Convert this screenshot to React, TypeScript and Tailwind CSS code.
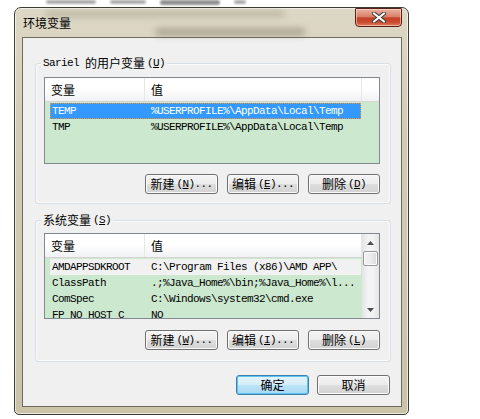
import React from "react";

type Row = { name: string; value: string; state?: "focus" | "dim" };

const cjk = "font-['SimSun','Noto_Sans_CJK_SC',sans-serif]";
const mono = "font-['Liberation_Mono','Noto_Sans_CJK_SC',monospace] text-[11px] tracking-[-0.6px]";

const userVars: Row[] = [
  { name: "TEMP", value: "%USERPROFILE%\\AppData\\Local\\Temp", state: "focus" },
  { name: "TMP", value: "%USERPROFILE%\\AppData\\Local\\Temp" },
];

const sysVars: Row[] = [
  { name: "AMDAPPSDKROOT", value: "C:\\Program Files (x86)\\AMD APP\\", state: "dim" },
  { name: "ClassPath", value: ".;%Java_Home%\\bin;%Java_Home%\\l..." },
  { name: "ComSpec", value: "C:\\Windows\\system32\\cmd.exe" },
  { name: "FP_NO_HOST_C", value: "NO" },
];

// label like 新建 (N)...
const Mn = ({ zh, pre, k, post }: { zh: string; pre?: string; k: string; post?: string }) => (
  <span className="flex items-center leading-none">
    {pre && <span className={`${mono} whitespace-pre`}>{pre}</span>}
    <span className={`${cjk} text-[12px]`}>{zh}</span>
    <span className={`${mono} whitespace-pre ml-[2px]`}>
      (<u>{k}</u>){post}
    </span>
  </span>
);

const Btn = ({ children, className = "", primary = false }: { children: React.ReactNode; className?: string; primary?: boolean }) => (
  <button
    className={`h-[20px] rounded-[3px] border flex items-center justify-center text-black ${
      primary
        ? "border-[#3c7fb1] bg-[linear-gradient(180deg,#e5f4fc_0%,#d4edfb_50%,#bde4f9_51%,#a9d8f2_100%)] shadow-[inset_0_0_0_1px_#5cc2f0]"
        : "border-[#707070] bg-[linear-gradient(180deg,#f4f4f4_0%,#ececec_50%,#dedede_51%,#d2d2d2_100%)] shadow-[inset_0_0_0_1px_#fbfbfb]"
    } ${className}`}
  >
    {children}
  </button>
);

const Arrow = ({ up }: { up?: boolean }) => (
  <svg width="7" height="4" viewBox="0 0 7 4">
    <path d={up ? "M0 4 L3.5 0 L7 4 Z" : "M0 0 L7 0 L3.5 4 Z"} fill="#4d4d4d" />
  </svg>
);

const ScrollBar = () => (
  <div className="w-[17px] h-full shrink-0 flex flex-col bg-[linear-gradient(90deg,#e4e4e4_0%,#f3f3f3_35%,#f3f3f3_65%,#e4e4e4_100%)]">
    <div className="h-[17px] flex items-center justify-center">
      <Arrow up />
    </div>
    <div className="h-[15px] mx-[1px] rounded-[2px] border border-[#979797] bg-[linear-gradient(90deg,#f2f2f2_0%,#ebebeb_50%,#d9d9d9_100%)] shadow-[inset_0_0_0_1px_#fbfbfb]" />
    <div className="flex-1" />
    <div className="h-[17px] flex items-center justify-center">
      <Arrow />
    </div>
  </div>
);

const VarList = ({ rows, scroll, h }: { rows: Row[]; scroll?: boolean; h: string }) => (
  <div className={`w-[336px] ${h} border border-[#828790] bg-[#cce8cf] flex overflow-hidden`}>
    <div className="flex-1 flex flex-col min-w-0">
      <div className={`h-[24px] shrink-0 flex border-b border-[#d5d5d5] bg-[linear-gradient(180deg,#ffffff_0%,#ffffff_45%,#f1f2f4_100%)] text-[12px] text-black ${cjk}`}>
        <div className="w-[100px] border-r border-[#e3e6ea] pl-[6px] flex items-center">变量</div>
        <div className="w-[217px] border-r border-[#e3e6ea] pl-[6px] flex items-center">值</div>
        <div className="flex-1" />
      </div>
      <div className="flex flex-col pt-[1px]">
        {rows.map((r) => (
          <div
            key={r.name}
            className={`ml-[5px] w-[311px] h-[16px] shrink-0 flex items-center ${mono} whitespace-pre ${
              r.state === "focus"
                ? "bg-[#3399ff] text-white outline-1 outline-dotted outline-[#f0903c] -outline-offset-1"
                : r.state === "dim"
                ? "bg-[#f1f1f1] text-black"
                : "text-black"
            }`}
          >
            <span className="w-[101px] pl-[2px] shrink-0">{r.name}</span>
            <span>{r.value}</span>
          </div>
        ))}
      </div>
    </div>
    {scroll && <ScrollBar />}
  </div>
);

const Group = ({ label, className, children }: { label: React.ReactNode; className: string; children: React.ReactNode }) => (
  <div className={`relative w-[356px] rounded-[3px] border border-[#d5dfe5] shadow-[inset_0_0_0_1px_#fbfbfb] ${className}`}>
    <div className="absolute -top-[8px] left-[5px] px-[2px] bg-[#f0f0f0] h-[14px] flex items-center">{label}</div>
    {children}
  </div>
);

export default function App() {
  return (
    <div className="w-[480px] h-[419px] bg-white overflow-hidden">
      {/* blurred stuff above the window */}
      <div className="h-[7px] flex items-start gap-[14px] pl-[46px] overflow-hidden">
        <div className="w-[50px] h-[4px] rounded-full bg-[#555]/50 blur-[1px]" />
        <div className="w-[36px] h-[4px] rounded-full bg-[#555]/50 blur-[1px]" />
        <div className="w-[60px] h-[5px] rounded-full bg-[#444]/60 blur-[1px]" />
        <div className="w-[12px] h-[4px] rounded-full bg-[#555]/50 blur-[1px]" />
      </div>

      <div className="ml-[14px] w-[395px] h-[408px] rounded-t-[7px] rounded-b-[5px] border border-[#3e3c35] bg-[linear-gradient(180deg,#ddd8c6_0%,#d3ccb4_30%,#cbc3a8_100%)] shadow-[inset_0_0_0_1px_rgba(255,255,255,0.6)] flex flex-col relative overflow-hidden">
        {/* glass blur */}
        <div className="absolute top-[20px] left-[140px] w-[150px] h-[8px] rounded-full bg-[#6b6552]/40 blur-[3px]" />
        <div className="absolute top-[3px] left-[30px] w-[240px] h-[6px] rounded-full bg-[#8a846f]/40 blur-[3px]" />

        <div className="h-[29px] shrink-0 flex items-start justify-between pl-[8px] pr-[6px] relative">
          <div className={`${cjk} text-[12px] text-black pt-[9px] leading-none`}>环境变量</div>
          <div className="w-[47px] h-[19px] rounded-b-[4px] rounded-t-[1px] border border-[#5a2015] bg-[linear-gradient(180deg,#eab2a2_0%,#d98068_45%,#c4432a_52%,#c7482e_75%,#e07a58_100%)] shadow-[inset_0_0_0_1px_rgba(255,230,220,0.55)] flex items-center justify-center">
            <svg width="14" height="11" viewBox="0 0 14 11">
              <path d="M2 1.5 L12 9.5 M12 1.5 L2 9.5" stroke="#3a3a3a" strokeWidth="4" strokeLinecap="round" />
              <path d="M2 1.5 L12 9.5 M12 1.5 L2 9.5" stroke="#ffffff" strokeWidth="2.2" strokeLinecap="round" />
            </svg>
          </div>
        </div>

        <div className="ml-[7px] w-[380px] h-[370px] border border-[#6f6c5f] bg-[#f0f0f0] flex flex-col pl-[12px] pt-[25px]">
          <Group
            className="h-[141px] flex flex-col pl-[8px] pt-[13px]"
            label={<Mn pre="Sariel " zh="的用户变量" k="U" />}
          >
            <VarList rows={userVars} h="h-[87px]" />
            <div className="flex justify-end gap-[9px] pr-[10px] mt-[10px]">
              <Btn className="w-[73px]"><Mn zh="新建" k="N" post="..." /></Btn>
              <Btn className="w-[72px]"><Mn zh="编辑" k="E" post="..." /></Btn>
              <Btn className="w-[72px]"><Mn zh="删除" k="D" /></Btn>
            </div>
          </Group>

          <Group
            className="mt-[16px] h-[142px] flex flex-col pl-[8px] pt-[12px]"
            label={<Mn zh="系统变量" k="S" />}
          >
            <VarList rows={sysVars} h="h-[86px]" scroll />
            <div className="flex justify-end gap-[9px] pr-[10px] mt-[11px]">
              <Btn className="w-[73px]"><Mn zh="新建" k="W" post="..." /></Btn>
              <Btn className="w-[72px]"><Mn zh="编辑" k="I" post="..." /></Btn>
              <Btn className="w-[72px]"><Mn zh="删除" k="L" /></Btn>
            </div>
          </Group>

          <div className="flex justify-end gap-[8px] pr-[11px] mt-[13px]">
            <Btn primary className={`w-[73px] h-[19px] ${cjk} text-[12px]`}>确定</Btn>
            <Btn className={`w-[73px] h-[19px] ${cjk} text-[12px]`}>取消</Btn>
          </div>
        </div>
      </div>
    </div>
  );
}
